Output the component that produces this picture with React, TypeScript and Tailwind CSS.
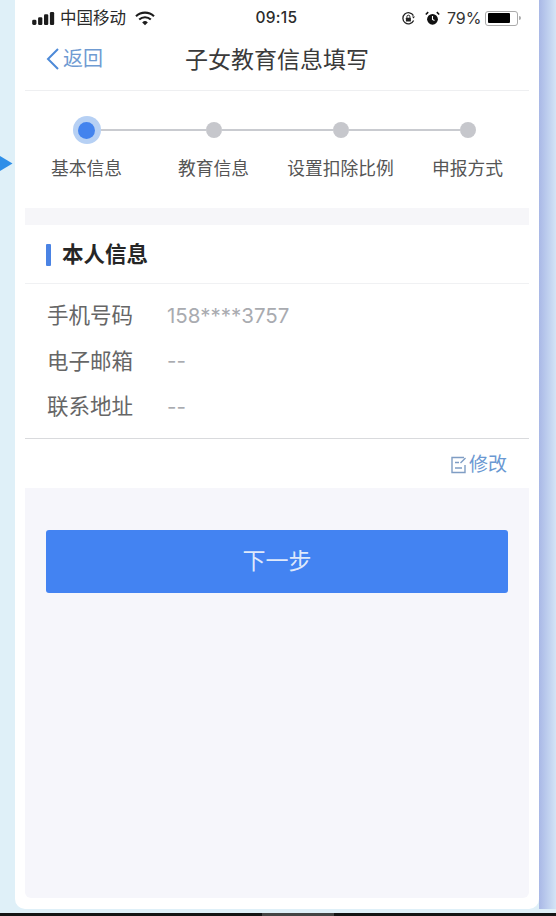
const STEPS = ['基本信息', '教育信息', '设置扣除比例', '申报方式'];

const FIELDS = [
  { label: '手机号码', value: '158****3757' },
  { label: '电子邮箱', value: '--' },
  { label: '联系地址', value: '--' },
];

const FONT = "font-['Inter','Noto_Sans_CJK_SC',sans-serif]";

function StatusBar() {
  return (
    <div className="flex h-[36px] items-center justify-between pl-[7px] pr-[8px] text-[#222]">
      <div className="flex w-[160px] items-center">
        <svg width="24" height="13" viewBox="0 0 20 11" className="mr-[4px]">
          <rect x="0" y="6.5" width="3.6" height="4.5" rx="1.2" fill="#1c1c1c" />
          <rect x="5" y="4.5" width="3.6" height="6.5" rx="1" fill="#1c1c1c" />
          <rect x="10" y="2" width="3.6" height="9" rx="1" fill="#1c1c1c" />
          <rect x="15" y="0" width="3.6" height="11" rx="1" fill="#1c1c1c" />
        </svg>
        <span className="text-[16.5px] leading-none text-[#2a2a2a]">中国移动</span>
        <svg width="20" height="15" viewBox="0 0 20 15" className="ml-[9px]">
          <path d="M1 5.2a13 13 0 0 1 18 0" fill="none" stroke="#1c1c1c" strokeWidth="2.1" />
          <path d="M4.2 8.5a8.4 8.4 0 0 1 11.6 0" fill="none" stroke="#1c1c1c" strokeWidth="2.1" />
          <path d="M7.2 11.4a4 4 0 0 1 5.6 0L10 14.2z" fill="#1c1c1c" />
        </svg>
      </div>
      <span className="text-[15.5px] font-medium leading-none tracking-[0.3px] text-[#2b2b2b]">09:15</span>
      <div className="flex w-[160px] items-center justify-end">
        <svg width="15" height="15" viewBox="0 0 15 15" className="mr-[9px]">
          <path d="M12.6 9.6A5.6 5.6 0 1 1 12.4 4.6" fill="none" stroke="#222" strokeWidth="1.3" />
          <path d="M11 5.6h3l-1.5 2z" fill="#222" />
          <rect x="4.9" y="6.7" width="5" height="3.9" rx="0.6" fill="#222" />
          <path d="M5.9 6.9V5.7a1.5 1.5 0 0 1 3 0v1.2" fill="none" stroke="#222" strokeWidth="1" />
        </svg>
        <svg width="15" height="15" viewBox="0 0 15 15" className="mr-[7px]">
          <circle cx="7.5" cy="8.3" r="5.4" fill="#111" />
          <path d="M7.5 5v3.4l2 1" fill="none" stroke="#fff" strokeWidth="1.1" />
          <path d="M0.8 3.5 3.2 1.2M14.2 3.5 11.8 1.2" stroke="#111" strokeWidth="1.6" />
        </svg>
        <span className="mr-[4px] text-[16px] leading-none text-[#333]">79%</span>
        <div className="flex h-[15px] w-[33px] items-center rounded-[3px] border border-[#aaa] p-[1.5px]">
          <div className="h-full w-[79%] rounded-[1px] bg-black" />
        </div>
        <div className="ml-[1px] h-[4px] w-[1.5px] rounded-r-sm bg-[#aaa]" />
      </div>
    </div>
  );
}

function NavBar() {
  return (
    <div className="relative flex h-[55px] items-center justify-center border-b border-[#eeeff1] pb-[6px]">
      <div className="absolute left-[20px] top-[11px] flex items-center text-[#5a8fd6]">
        <svg width="15" height="24" viewBox="0 0 15 24" className="mr-[3px]">
          <path d="M13 2 3 12l10 10" fill="none" stroke="#4d8ad8" strokeWidth="2" />
        </svg>
        <span className="text-[20px] leading-none text-[#6f9bd2]">返回</span>
      </div>
      <h1 className="text-[23px] font-normal leading-none text-[#3a3a3a]">子女教育信息填写</h1>
    </div>
  );
}

function Stepper() {
  return (
    <div className="-mx-[2px] grid h-[117px] grid-cols-4 pt-[25px]">
      {STEPS.map((step, index) => (
        <div key={step} className="flex flex-col items-center">
          <div className="flex h-[28px] w-full items-center">
            <div className={`h-[1.5px] flex-1 ${index === 0 ? '' : 'bg-[#c9cbd0]'}`} />
            {index === 0 ? (
              <div className="flex h-[28px] w-[28px] items-center justify-center rounded-full bg-[#b6d0f4]">
                <div className="h-[17px] w-[17px] rounded-full bg-[#4383ee]" />
              </div>
            ) : (
              <div className="h-[16px] w-[16px] rounded-full bg-[#c6c7cc]" />
            )}
            <div className={`h-[1.5px] flex-1 ${index === 3 ? '' : 'bg-[#c9cbd0]'}`} />
          </div>
          <span className="mt-[13px] whitespace-nowrap text-[17.8px] leading-[24px] text-[#555]">{step}</span>
        </div>
      ))}
    </div>
  );
}

function InfoCard() {
  return (
    <section>
      <div className="flex h-[59px] items-center gap-[11px] border-b border-[#f0f1f3] px-[21px] pt-[2px]">
        <div className="h-[22px] w-[5px] rounded-[1px] bg-[#4a83e4]" />
        <h2 className="text-[21.5px] font-bold leading-none text-[#262626]">本人信息</h2>
      </div>
      <div className="border-b border-[#d9dadd] px-[22px] pb-[8px] pt-[9px]">
        {FIELDS.map((field) => (
          <div key={field.label} className="flex h-[45.6px] items-center">
            <span className="w-[120px] text-[21.5px] leading-none text-[#666]">{field.label}</span>
            <span className="text-[20.5px] leading-none text-[#a9abb0]">{field.value}</span>
          </div>
        ))}
      </div>
      <div className="flex h-[49px] items-center justify-end pr-[22px] pt-[3px]">
        <svg width="18" height="20" viewBox="0 0 18 20" className="mr-[1px]">
          <path d="M14 2.5H2v15h13V10" fill="none" stroke="#7f9dc4" strokeWidth="1.4" />
          <path d="M5 7.5h4M5 13h7M15.5 3 10.5 8" fill="none" stroke="#7f9dc4" strokeWidth="1.4" />
        </svg>
        <span className="text-[19px] leading-none text-[#6a98d2]">修改</span>
      </div>
    </section>
  );
}

export default function App() {
  return (
    <div className={`flex h-[916px] w-[556px] flex-col overflow-hidden bg-[#dff0f8] ${FONT}`}>
      <div className="flex min-h-0 flex-1 pb-[4px]">
        <div className="w-[15px] shrink-0 pt-[156px]">
          <svg width="13" height="15" viewBox="0 0 13 15">
            <path d="M0 0 12.5 7.5 0 15z" fill="#2f8fe8" />
          </svg>
        </div>
        <main className="flex w-[524px] shrink-0 flex-col rounded-b-[10px] bg-white px-[10px] pb-[11px]">
          <StatusBar />
          <NavBar />
          <Stepper />
          <div className="h-[17px] bg-[#f6f6f9]" />
          <InfoCard />
          <div className="flex-1 rounded-b-[6px] bg-[#f6f6fb] px-[21px] pt-[42px]">
            <button className="h-[63px] w-full rounded-[3px] bg-[#4383f2] text-[23px] font-normal text-[#dfe9fb]">
              下一步
            </button>
          </div>
        </main>
        <div className="flex-1 bg-gradient-to-r from-[#a9b8e6] to-[#d3e4f6]" />
      </div>
      <div className="flex h-[3px] shrink-0 bg-[#141414]">
        <div className="ml-[262px] h-full w-[72px] bg-[#444]" />
      </div>
    </div>
  );
}
